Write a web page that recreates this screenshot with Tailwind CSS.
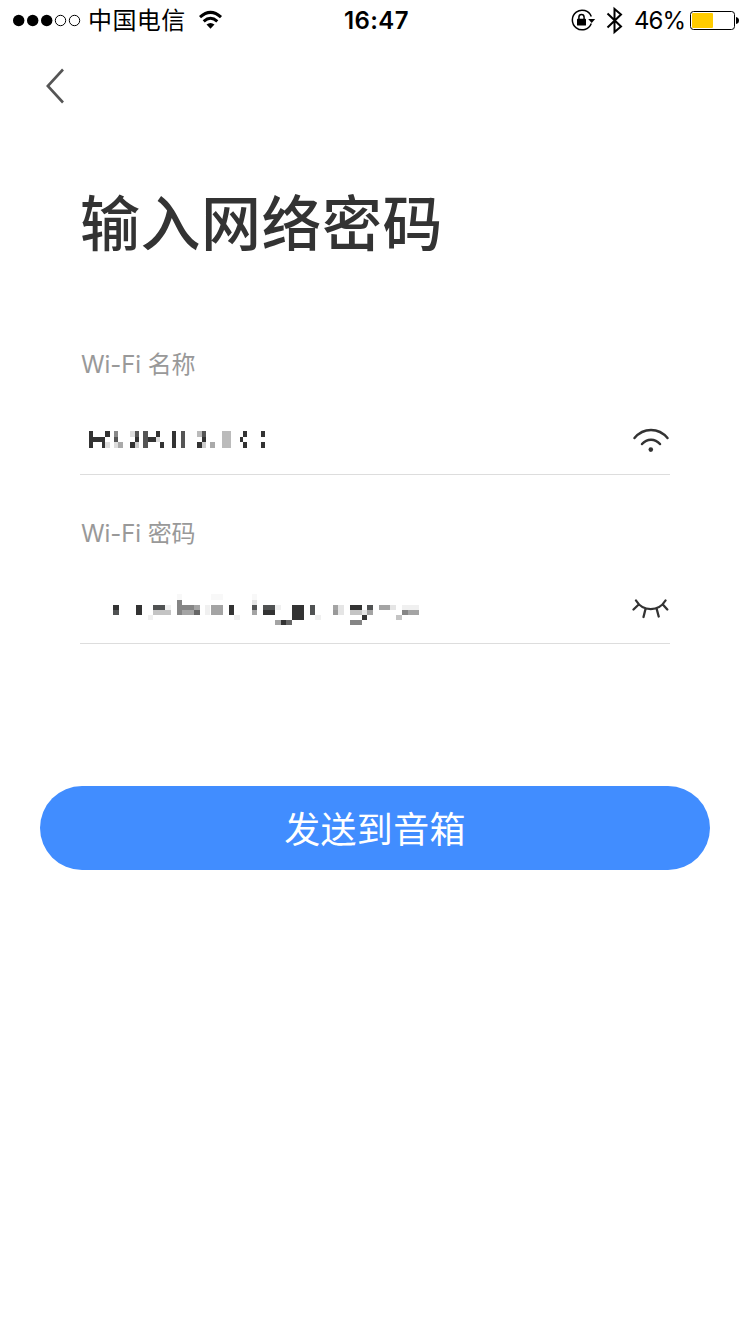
<!DOCTYPE html>
<html lang="zh-CN">
<head>
<meta charset="utf-8">
<title>输入网络密码</title>
<script src="https://cdn.jsdelivr.net/npm/@tailwindcss/browser@4"></script>
</head>
<body class="bg-white">
<div class="w-[750px] h-[1334px] bg-white overflow-hidden flex flex-col font-['Inter','Noto_Sans_CJK_SC',sans-serif] text-[#333]">
  <header class="h-10 shrink-0 grid grid-cols-[344px_1fr_auto] items-center text-black">
    <div class="flex items-center pl-3 h-10">
      <svg class="w-[70px] h-10 shrink-0" viewBox="0 0 70 40"><g><circle cx="6.700" cy="20.500" r="5.700"/><circle cx="20.700" cy="20.500" r="5.700"/><circle cx="34.700" cy="20.500" r="5.700"/></g><g fill="none" stroke="#000" stroke-width="1"><circle cx="48.500" cy="20.500" r="5.200"/><circle cx="62.500" cy="20.500" r="5.200"/></g></svg>
      <span class="ml-[6px] text-[24px] leading-[38px] pb-0.5 font-['Noto_Sans_CJK_SC',sans-serif] whitespace-nowrap tracking-[0.4px]">中国电信</span>
      <svg class="ml-[13px] w-6 h-10 shrink-0" viewBox="0 0 24 40" fill="none" stroke="#000" stroke-width="3"><path d="M1 17.200 Q11.500 7.600 22 17.200M4.700 21.300 Q11.500 15.200 18.300 21.300"/><path d="M7.500 24.500 Q11.500 21.300 15.500 24.500 L11.500 28.700Z" fill="#000" stroke="none"/></svg>
    </div>
    <span class="text-[24px] leading-[38px] pt-0.5 font-semibold tracking-[0.4px]">16:47</span>
    <div class="flex items-center h-10">
      <svg class="w-[26px] h-10 shrink-0" viewBox="0 0 26 40"><path d="M21.300 23.500A9.800 9.800 0 1 1 21.300 16.500" fill="none" stroke="#000" stroke-width="1.500"/><path d="M18.200 19H25.200L21.700 23Z"/><rect x="7" y="18.700" width="9" height="6.800" rx=".6"/><path d="M8.900 19V17.200a2.600 2.600 0 0 1 5.200 0V19" fill="none" stroke="#000" stroke-width="1.500"/></svg>
      <svg class="ml-[10px] w-[18px] h-10 shrink-0" viewBox="0 0 18 40" fill="none" stroke="#000" stroke-width="2"><path d="M1.500 13.500L15 26.500L8.500 32V9L15 14.500L1.500 27.500"/></svg>
      <span class="ml-[10px] w-[56px] text-[24px] leading-[38px] pt-0.5 whitespace-nowrap tracking-[-0.9px]">46%</span>
      <svg class="w-[60px] h-10 shrink-0" viewBox="0 0 60 40"><rect x=".5" y="11.500" width="44" height="18" rx="3" fill="none" stroke="#000"/><rect x="2" y="13" width="21" height="15" rx="1" fill="#fc0"/><path d="M46 17Q49 17.500 49 20.500T46 24Z"/></svg>
    </div>
  </header>
  <nav class="h-[88px] shrink-0 pl-10 flex items-center">
    <svg class="w-8 h-12" viewBox="0 0 32 48" fill="none" stroke="#555" stroke-width="2.600"><path d="M23 9.500L7.800 26L23 42.500"/></svg>
  </nav>
  <main class="flex flex-col">
    <h1 class="mt-[47px] pl-20 h-[90px] leading-[90px] text-[60px] font-medium tracking-[0.5px] font-['Noto_Sans_CJK_SC',sans-serif]">输入网络密码</h1>
    <section class="mx-20 mt-[79px] h-[131px] flex flex-col border-b border-[#ddd]">
      <label class="h-10 pt-px pl-px leading-10 text-[24px] text-[#999] tracking-[-0.1px]">Wi-Fi 名称</label>
      <div class="flex items-center justify-between h-16 mt-6">
        <svg class="w-[360px] h-10" viewBox="80 420 360 40" shape-rendering="crispEdges" fill="#333">
          <path d="M89 431h4v17h-4zM93 437h12v5h-12zM102 442h3v6h-3zM105 431h5v6h-5z"/>
          <path fill="#ddd" d="M105 442h5v6h-5zM114 442h4v6h-4zM130 431h5v6h-5zM156 437h4v5h-4z"/>
          <path fill="#888" d="M114 431h4v6h-4z"/><path fill="#555" d="M114 437h4v5h-4zM135 431h4v6h-4zM143 431h5v17h-5zM181 431h4v17h-4zM202 431h4v6h-4z"/>
          <path fill="#aaa" d="M118 442h5v6h-5zM210 442h5v6h-5z"/>
          <path d="M135 437h4v5h-4zM130 442h5v6h-5zM148 437h8v5h-8zM156 431h4v6h-4zM160 442h4v6h-4zM172 431h4v17h-4zM202 437h4v5h-4zM197 442h5v6h-5zM243 431h4v6h-4zM240 437h3v5h-3zM243 442h4v6h-4zM261 431h4v6h-4zM261 442h4v6h-4z"/>
          <path fill="#bbb" d="M197 431h5v6h-5zM222 431h9v17h-9z"/><path fill="#ccc" d="M135 442h4v6h-4zM202 442h4v6h-4z"/>
        </svg>
        <svg class="w-[38px] h-10" viewBox="632 420 38 40" fill="none" stroke="#333" stroke-width="2.500" stroke-linecap="round"><path d="M634.500 438C643.500 427.300 658.500 427.300 667.500 438M642 444C647 438.200 655 438.200 660 444"/><circle cx="650.800" cy="449.600" r="2.300" fill="#333" stroke="none"/></svg>
      </div>
    </section>
    <section class="mx-20 mt-[38px] h-[131px] flex flex-col border-b border-[#ddd]">
      <label class="h-10 pt-px pl-px leading-10 text-[24px] text-[#999] tracking-[-0.1px]">Wi-Fi 密码</label>
      <div class="flex items-center justify-between h-16 mt-6">
        <svg class="w-[360px] h-10" viewBox="80 589 360 40" shape-rendering="crispEdges" fill="#333">
          <path d="M113 605h6v5h-6zM136 605h6v10h-6zM229 605h5v10h-5zM263 610h12v5h-12zM292 605h12v15h-12zM281 620h5v5h-5zM350 605h12v5h-12zM362 615h5v5h-5z"/>
          <path fill="#505253" d="M113 610h6v5h-6zM153 605h12v5h-12zM252 605h5v5h-5zM263 605h12v5h-12zM310 605h5v10h-5zM367 605h6v5h-6z"/>
          <path fill="#666" d="M194 610h6v5h-6zM286 620h6v5h-6z"/>
          <path fill="#858585" d="M177 600h5v15h-5zM182 605h12v5h-12zM350 620h12v5h-12zM402 610h6v5h-6z"/>
          <path fill="#a4a4a4" d="M182 610h12v5h-12zM194 605h6v5h-6zM211 605h12v10h-12zM252 610h5v5h-5zM275 620h6v5h-6zM333 605h5v5h-5zM367 610h6v5h-6zM379 605h11v5h-11zM408 610h11v5h-11z"/>
          <path fill="#999" d="M333 610h5v5h-5z"/>
          <path fill="#c4c4c4" d="M153 610h18v5h-18zM350 610h12v5h-12zM396 615h6v5h-6z"/>
          <path fill="#e5e5e5" d="M252 600h5v5h-5zM338 605h6v10h-6zM362 610h5v5h-5zM390 605h6v5h-6z"/>
          <path fill="#f0f0f0" d="M148 615h5v5h-5zM165 605h6v5h-6zM205 605h5v10h-5zM234 615h6v5h-6zM275 605h6v5h-6zM315 615h6v5h-6zM402 605h17v5h-17z"/>
          <path fill="#f8f8f8" d="M177 594h5v6h-5zM211 594h12v6h-12zM252 594h5v6h-5z"/>
        </svg>
        <svg class="w-[38px] h-10" viewBox="632 589 38 40" fill="none" stroke="#333" stroke-width="2.300" stroke-linecap="round"><path d="M636 600.500C643 612 658.500 612 665.500 600.500M638.700 604.500L633.500 609.500M662.800 604.500L667.300 609.500M645.500 609L643.500 617M656.700 609L658.700 616.500"/></svg>
      </div>
    </section>
    <button class="mx-10 mt-[142px] h-[84px] pb-0.5 rounded-full bg-[#418dff] text-white text-[36px] leading-[82px] font-['Noto_Sans_CJK_SC',sans-serif] tracking-[0.3px]">发送到音箱</button>
  </main>
</div>
</body>
</html>
